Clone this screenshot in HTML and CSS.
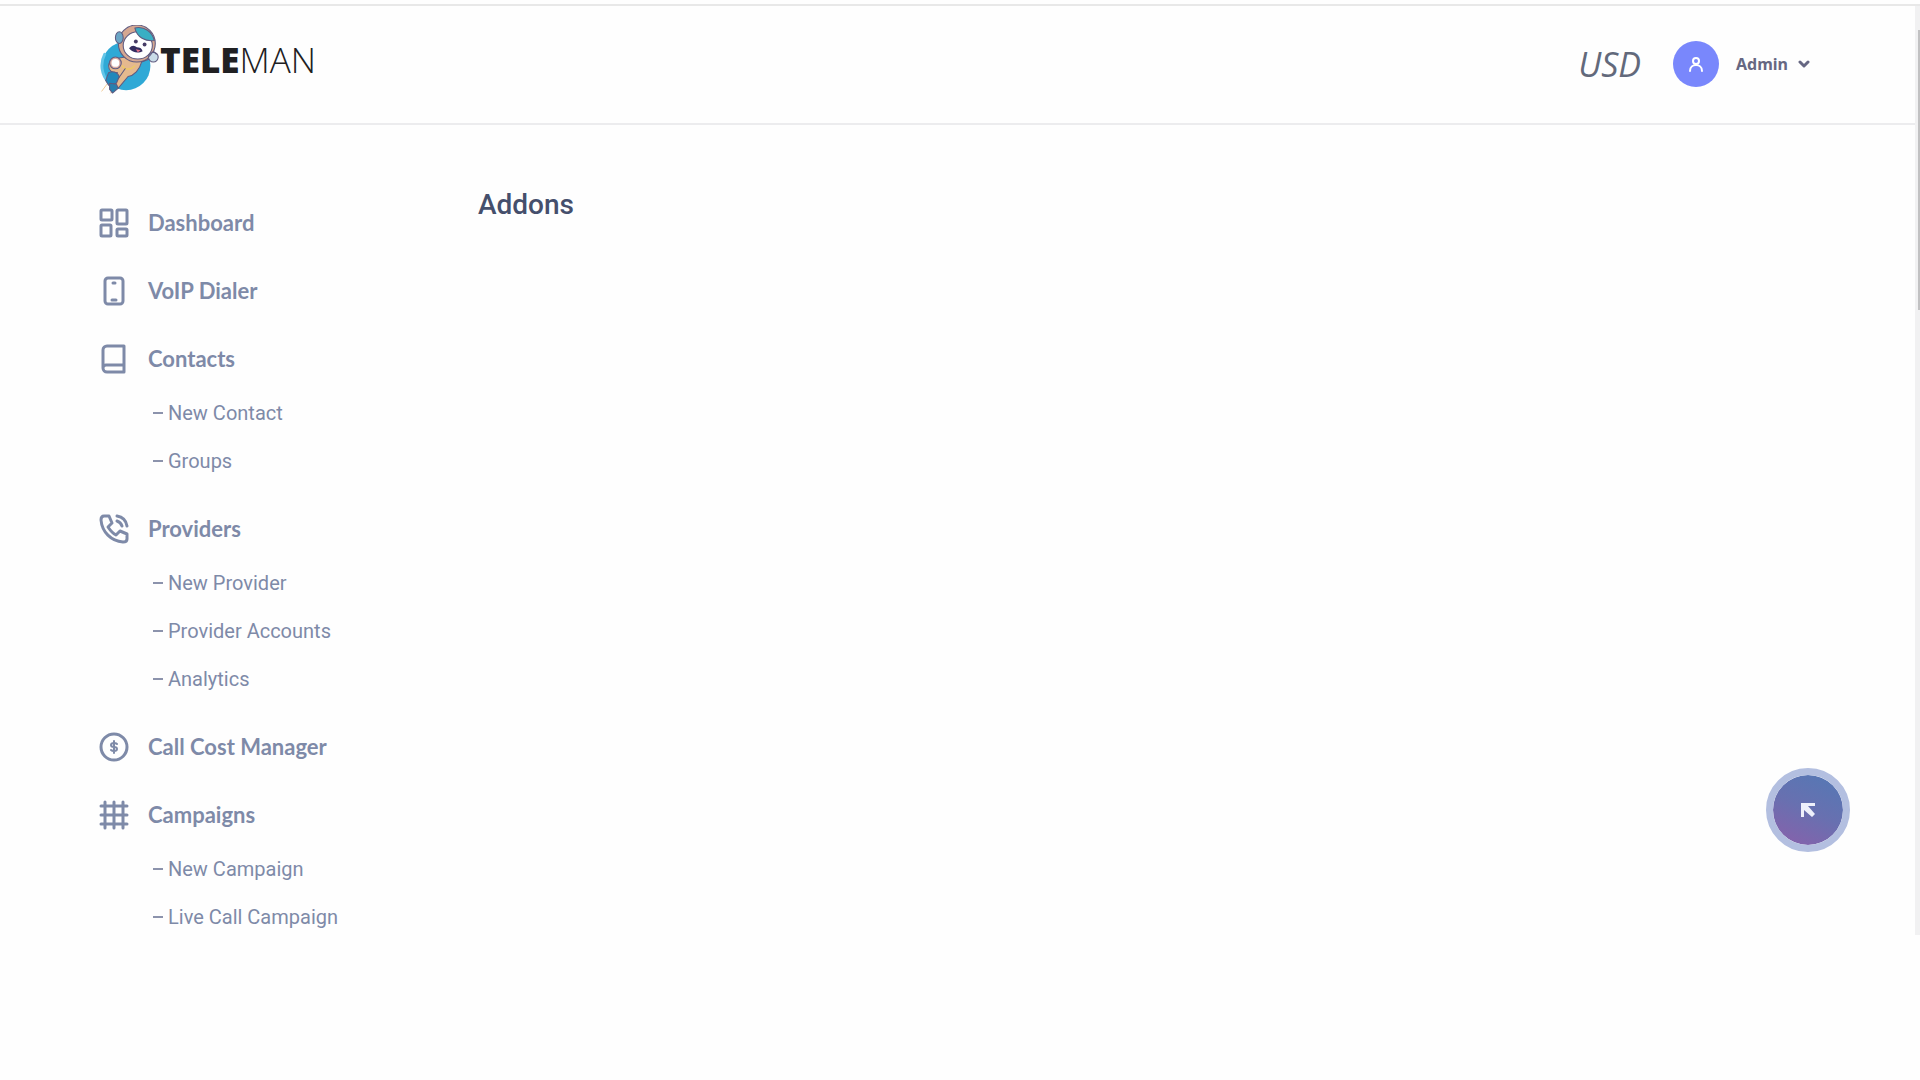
FILE: index.html
```html
<!DOCTYPE html>
<html lang="en">
<head>
    <meta charset="UTF-8">
    <meta name="viewport" content="width=device-width, initial-scale=1">
    <title>Teleman - Addons</title>
    <link rel="stylesheet" href="styles.css">
</head>
<body>

<div class="app">
    <header class="header">
        <a class="logo" href="/" aria-label="Teleman">
            <svg class="logo-mark" viewBox="0 0 60 72" aria-hidden="true">
                <!-- planet -->
                <circle cx="26" cy="42" r="25" fill="#2fa9d6"/>
                <path d="M4 30A25 25 0 0 0 8 59" fill="none" stroke="#63c5e8" stroke-width="3"/>
                <!-- trail -->
                <path d="M7 60L1 68M13 66l-3 4" stroke="#efc995" stroke-width="1"/>
                <!-- body and legs -->
                <g stroke="#5f5b80" stroke-width="1.1" stroke-linejoin="round">
                    <path d="M19 34c-6 0-11 3-11 8s4 8 9 7l-7 10 8 6 10-12c6-1 12-7 14-15l8-3 1-6-9 1z" fill="#e5b98e"/>
                    <path d="M8 49c5-2 9 0 11 4l-3 7-8 2-3-5z" fill="#2188bb"/>
                    <path d="M9 60l7 1 2 4-6 5-3-4z" fill="#277fae"/>
                    <circle cx="15" cy="39" r="6" fill="#d9a9a0"/>
                    <circle cx="15" cy="39" r="4" fill="#fff" stroke="none"/>
                    <path d="M22 42c3 4 8 5 13 0" fill="none" stroke="#f0ce58"/>
                    <path d="M25 45l-7 10" fill="none"/>
                    <!-- helmet -->
                    <circle cx="37" cy="19" r="19" fill="#d5a791"/>
                    <ellipse cx="38" cy="21" rx="15" ry="14" fill="#fff"/>
                    <path d="M35 3c10-2 18 4 20 13-9 1-18-3-20-13z" fill="#39afc4"/>
                    <ellipse cx="19" cy="13" rx="4" ry="6" fill="#6ba6c6"/>
                    <circle cx="54" cy="33" r="5" fill="#c9dce8"/>
                    <path d="M50 32l4-5 3 3" fill="none"/>
                </g>
                <!-- face -->
                <circle cx="36" cy="17" r="2" fill="#473c66"/>
                <circle cx="45" cy="20" r="2" fill="#473c66"/>
                <path d="M29 24c3-4 6-3 8-1 3 0 5 1 6 4-4 2-10 2-14-3z" fill="#342d60"/>
                <path d="M36 25l5 1-3 2z" fill="#e66f87"/>
            </svg>
            <span class="logo-text"><b>TELE</b>MAN</span>
        </a>
        <div class="header-tools">
            <a class="currency" href="#">USD</a>
            <button class="user" type="button">
                <span class="avatar">
                    <svg viewBox="0 0 14 15" aria-hidden="true"><circle cx="7" cy="4" r="3"/><path d="M1 14c0-4 3-6 6-6s6 2 6 6"/></svg>
                </span>
                <span>Admin</span>
                <svg class="chevron" viewBox="0 0 12 8" aria-hidden="true"><path d="M2 2l4 4 4-4"/></svg>
            </button>
        </div>
    </header>

    <div class="content">
        <nav class="sidebar">
            <div class="group">
                <a class="item" href="#">
                    <svg viewBox="0 0 30 30" aria-hidden="true"><rect x="2" y="2" width="11" height="10" rx="1"/><rect x="18" y="2" width="10" height="14" rx="1"/><rect x="2" y="17" width="10" height="11" rx="1"/><rect x="18" y="21" width="10" height="7" rx="1"/></svg>
                    Dashboard
                </a>
            </div>
            <div class="group">
                <a class="item" href="#">
                    <svg viewBox="0 0 30 30" aria-hidden="true"><rect x="6" y="2" width="18" height="26" rx="3"/><path d="M14 7h2M13 24h4"/></svg>
                    VoIP Dialer
                </a>
            </div>
            <div class="group">
                <a class="item" href="#">
                    <svg viewBox="0 0 30 30" aria-hidden="true"><path d="M25 21V2H8a4 4 0 0 0-4 4v18a4 4 0 0 0 4 4h17v-7H7a3 3 0 0 0-3 3"/></svg>
                    Contacts
                </a>
                <div class="sub">
                    <a href="#">New Contact</a>
                    <a href="#">Groups</a>
                </div>
            </div>
            <div class="group">
                <a class="item" href="#">
                    <svg viewBox="0 0 30 30" aria-hidden="true"><path d="M10 2H5C3 2 2 4 2 6c1 12 10 21 22 22 2 0 4-1 4-3v-5l-7-3-4 4c-4-2-6-5-8-8l4-4zM18 7c3 1 4 2 5 5M18 2c6 1 9 4 10 10"/></svg>
                    Providers
                </a>
                <div class="sub">
                    <a href="#">New Provider</a>
                    <a href="#">Provider Accounts</a>
                    <a href="#">Analytics</a>
                </div>
            </div>
            <div class="group">
                <a class="item" href="#">
                    <svg viewBox="0 0 30 30" aria-hidden="true"><circle cx="15" cy="15" r="13"/><path class="thin" d="M18 12c-1-1-2-1-3-1-4 0-4 4 0 4s4 4 0 4c-1 0-2 0-3-1M15 9v12"/></svg>
                    Call Cost Manager
                </a>
            </div>
            <div class="group">
                <a class="item" href="#">
                    <svg viewBox="0 0 30 30" aria-hidden="true"><path d="M6 2v26M15 2v26M24 2v26M2 6h26M2 15h26M2 24h26"/></svg>
                    Campaigns
                </a>
                <div class="sub">
                    <a href="#">New Campaign</a>
                    <a href="#">Live Call Campaign</a>
                </div>
            </div>
        </nav>
        <main class="main">
            <h1>Addons</h1>
        </main>
    </div>

    <div class="scrollbar"><div class="thumb"></div></div>
</div>

<button class="fab" type="button" aria-label="Open menu">
    <svg viewBox="0 0 16 16" aria-hidden="true"><path d="M1 1h14v3H8l7 8-3 3-8-7v7H1z"/></svg>
</button>

</body>
</html>
```
FILE: styles.css
```css
* {
    box-sizing: border-box;
}
body {
    margin: 0;
    font-family: Roboto, sans-serif;
    background-color: #fefefe;
    color: #7e8aa8;
}
a {
    color: inherit;
    text-decoration: none;
}
button {
    border: none;
    background: none;
    padding: 0;
    color: inherit;
    cursor: pointer;
}
svg {
    fill: none;
    stroke: currentColor;
    stroke-linecap: round;
    stroke-linejoin: round;
}
.app {
    position: relative;
    padding-top: 4px;
}
.header {
    display: flex;
    align-items: flex-start;
    justify-content: space-between;
    height: 121px;
    padding: 19px 110px 0 100px;
    border-top: 2px solid #e8e8e8;
    border-bottom: 2px solid #ececee;
}
.logo {
    display: flex;
    align-items: center;
    color: #202022;
}
.logo-mark {
    width: 60px;
    height: 70px;
    stroke: none;
}
.logo-text {
    font-family: "Open Sans", sans-serif;
    font-size: 35px;
    font-weight: 300;
    line-height: 40px;
}
.logo-text b {
    font-weight: 800;
}
.header-tools {
    display: flex;
    align-items: center;
    gap: 32px;
    height: 78px;
}
.currency {
    font-family: "Open Sans", sans-serif;
    font-size: 34px;
    font-style: italic;
    color: #62697b;
}
.user {
    display: flex;
    align-items: center;
    font-family: "Noto Sans", sans-serif;
    font-size: 16px;
    font-weight: 700;
    color: #666782;
}
.avatar {
    display: flex;
    align-items: center;
    justify-content: center;
    width: 46px;
    height: 46px;
    margin-right: 17px;
    border-radius: 50%;
    background-color: #7987fc;
    color: #fff;
}
.avatar svg {
    width: 14px;
    height: 15px;
    stroke-width: 2;
}
.chevron {
    width: 12px;
    height: 8px;
    margin-left: 10px;
    stroke-width: 3;
}
.content {
    display: flex;
}
.sidebar {
    display: flex;
    flex-direction: column;
    gap: 19px;
    width: 478px;
    padding: 73px 0 0 99px;
}
.item {
    display: flex;
    align-items: center;
    gap: 19px;
    height: 49px;
    font-family: Lato, sans-serif;
    font-size: 22px;
    font-weight: 700;
}
.item svg {
    width: 30px;
    height: 30px;
    stroke-width: 3;
}
.item .thin {
    stroke-width: 2;
}
.sub {
    padding: 6px 0 0 54px;
}
.sub a {
    display: flex;
    align-items: center;
    gap: 5px;
    height: 48px;
    font-size: 20px;
}
.sub a::before {
    content: "";
    width: 10px;
    height: 2px;
    background-color: #8c93ac;
}
.main {
    flex: 1;
    padding: 63px 40px 0 0;
}
.main h1 {
    margin: 0;
    font-size: 28px;
    font-weight: 500;
    line-height: 34px;
    color: #454f6c;
}
.scrollbar {
    position: absolute;
    top: 6px;
    right: 0;
    bottom: 6px;
    width: 5px;
    padding-top: 24px;
    background-color: #f1f1f2;
}
.thumb {
    height: 280px;
    margin-left: 3px;
    background-color: #c1c1c2;
}
.fab {
    position: fixed;
    right: 70px;
    bottom: 228px;
    display: flex;
    align-items: center;
    justify-content: center;
    width: 84px;
    height: 84px;
    border: 7px solid #b3bfe0;
    border-radius: 50%;
    background: linear-gradient(25deg, #8761ab 5%, #6870b0 50%, #5777b4 90%) padding-box;
    color: #eef0fb;
}
.fab svg {
    width: 16px;
    height: 16px;
    fill: currentColor;
    stroke: none;
}
```
